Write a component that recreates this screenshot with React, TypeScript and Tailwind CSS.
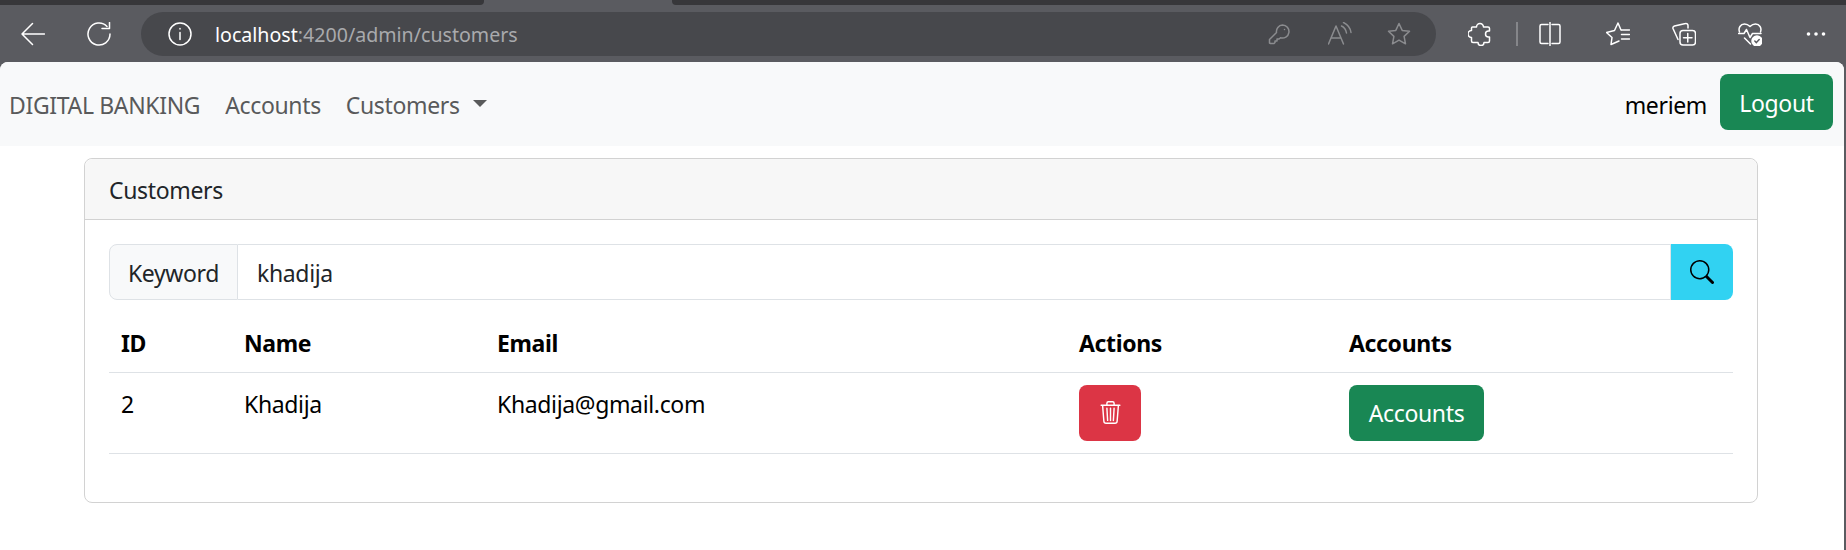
import { BsSearch, BsTrash3 } from "react-icons/bs";

const ToolIcon = ({ className, children }: { className: string; children: React.ReactNode }) => (
    <svg viewBox="0 0 24 24" fill="none" stroke="currentColor" strokeWidth="1.5" strokeLinecap="round" strokeLinejoin="round" className={`size-6 shrink-0 ${className}`}>
        {children}
    </svg>
);

const STAR = "M12 1.5l3.2 6.9 7.3.9-5.4 5.1 1.4 7.4-6.5-3.7-6.5 3.7 1.4-7.4-5.4-5.1 7.3-.9z";

const BrowserBar = () => (
    <div className="flex h-[62px] flex-col">
        <div className="flex h-[5px]">
            <div className="w-[484px] rounded-br bg-[#37373a]" />
            <div className="ml-[188px] flex-1 rounded-bl bg-[#37373a]" />
        </div>
        <div className="flex flex-1 items-center pr-[18px] text-white">
            <ToolIcon className="ml-[21px]">
                <path d="M23.5 12H1M11.5 1.5 1 12l10.5 10.5" />
            </ToolIcon>
            <ToolIcon className="ml-[42px]">
                <path d="M23 12A11 11 0 1 1 20 4.5" />
                <path d="M22.5.5V6.5H15" />
            </ToolIcon>
            <div className="ml-[30px] flex h-11 flex-1 items-center rounded-full bg-[#47484c]">
                <ToolIcon className="ml-[27px]">
                    <circle cx="12" cy="12" r="11" />
                    <path d="M12 10.5v7M12 6.5v.6" />
                </ToolIcon>
                <div className="ml-[23px] flex-1 pt-[2px] font-['Noto_Sans',sans-serif] text-[19.6px] tracking-normal text-[#a9aaad]">
                    <span className="text-white">localhost</span>:4200/admin/customers
                </div>
                <ToolIcon className="text-[#8b8c8f]">
                    <path d="M15.500 3a6.500 6.500 0 1 1-2 12.700l-1.500 1.300H10v2H8v1.500l-1 1H3.500L2.500 21v-3.500l7-7A6.500 6.500 0 0 1 15.500 3Z" />
                    <path d="M17.500 7.500v.1" />
                </ToolIcon>
                <ToolIcon className="ml-[37px] text-[#8b8c8f]">
                    <path d="M.5 22 8 4l7.5 18M3 16h10" />
                    <path d="M13.5 4c3 1.5 4.5 4 5 7M15.5.5c4 2 7 5.5 7.5 10" />
                </ToolIcon>
                <ToolIcon className="ml-[35px] text-[#8b8c8f]">
                    <path d={STAR} />
                </ToolIcon>
                <div className="w-[25px]" />
            </div>
            <ToolIcon className="ml-8">
                <path d="M4.500 5H8.500a3.500 3.500 0 0 1 7 0H20a1.500 1.500 0 0 1 1.500 1.500V9h-1a3 3 0 0 0 0 6h1v4a1.500 1.500 0 0 1-1.500 1.500h-4a3 3 0 0 1-6 0H5a1.500 1.500 0 0 1-1.500-1.500v-3.500a3.500 3.500 0 0 1 0-7V6a1 1 0 0 1 1-1Z" />
            </ToolIcon>
            <div className="ml-[24px] h-6 w-[2px] bg-[#85868a]" />
            <ToolIcon className="ml-[20px]">
                <path d="M10 2.500H3.500A1.500 1.500 0 0 0 2 4v16a1.500 1.500 0 0 0 1.500 1.500H10M14 2.500h6.500A1.500 1.500 0 0 1 22 4v16a1.500 1.500 0 0 1-1.500 1.500H14M12 .5v23" />
            </ToolIcon>
            <ToolIcon className="ml-[44px]">
                <path d="M15 8 12 1 8.500 8.500 .5 10.500 6 15.500 5 22.500 13 19" />
                <path d="M15.500 8H23.500M15.500 12.500H23.500M15.500 17H23.500" />
            </ToolIcon>
            <ToolIcon className="ml-[42px]">
                <path d="M6 17.500 1 6.500A2 2 0 0 1 2.500 4l11-2.500a2 2 0 0 1 2.500 2V6" />
                <rect x="8" y="8.500" width="15.500" height="14.500" rx="3" />
                <path d="M15.750 11.500v8.500M11.500 15.750h8.500" />
            </ToolIcon>
            <ToolIcon className="ml-[42px]">
                <path d="M1.500 10c-1.500-4 1-8 5-8 3 0 4.500 1.500 5.500 2.500C13 3.500 14.500 2 17.500 2c4 0 6.500 4 5 8" />
                <path d="M.5 11.500H6l2.500-4 3.500 8 2.500-4H23M6.500 16l6 6" />
                <circle cx="19" cy="19" r="5" fill="currentColor" />
                <path d="m16.800 19 1.600 1.600 2.800-3" stroke="#5a5b60" />
            </ToolIcon>
            <svg viewBox="0 0 24 24" fill="currentColor" className="ml-[42px] size-6 shrink-0">
                <circle cx="4.500" cy="12" r="1.800" />
                <circle cx="12" cy="12" r="1.800" />
                <circle cx="19.500" cy="12" r="1.800" />
            </svg>
        </div>
    </div>
);

const Navbar = () => (
    <nav className="flex h-[84px] items-center rounded-t-lg bg-[#f8f9fa] pt-[2px] pr-[11px] pl-[9px] text-[#595a5b]">
        <span>DIGITAL BANKING</span>
        <span className="ml-[25px]">Accounts</span>
        <span className="ml-[25px]">Customers</span>
        <span className="mb-[3px] ml-[13px] h-0 w-0 border-x-[7px] border-t-[7px] border-x-transparent border-t-[#595a5b]" />
        <span className="ml-auto text-black">meriem</span>
        <button type="button" className="mb-[6px] ml-[13px] h-14 w-[113px] rounded-lg bg-[#198754] pt-[2px] text-white">Logout</button>
    </nav>
);

const SearchRow = () => (
    <div className="flex h-14">
        <div className="flex w-[129px] items-center justify-center rounded-l-lg border border-[#dee2e6] bg-[#f8f9fa] pt-[2px] text-[#212529]">Keyword</div>
        <div className="flex flex-1 items-center border-y border-r border-[#dee2e6] pt-[2px] pl-[19px] text-[#212529]">khadija</div>
        <button type="button" className="flex w-[62px] items-center justify-center rounded-r-lg bg-[#31d2f2] text-black">
            <BsSearch className="size-6" />
        </button>
    </div>
);

const CustomersTable = () => (
    <table className="mt-[13px] w-full table-fixed text-left text-black">
        <thead>
            <tr className="border-b border-[#dee2e6]">
                <th className="w-[123px] px-3 pt-[13px] pb-[11px] font-bold">ID</th>
                <th className="w-[253px] px-3 pt-[13px] pb-[11px] font-bold">Name</th>
                <th className="w-[582px] px-3 pt-[13px] pb-[11px] font-bold">Email</th>
                <th className="w-[270px] px-3 pt-[13px] pb-[11px] font-bold">Actions</th>
                <th className="px-3 pt-[13px] pb-[11px] font-bold">Accounts</th>
            </tr>
        </thead>
        <tbody>
            <tr className="border-b border-[#dee2e6] align-top">
                <td className="px-3 pt-[14px]">2</td>
                <td className="px-3 pt-[14px]">Khadija</td>
                <td className="px-3 pt-[14px]">Khadija@gmail.com</td>
                <td className="p-3">
                    <button type="button" className="flex h-14 w-[62px] items-center justify-center rounded-lg bg-[#dc3545] text-white">
                        <BsTrash3 className="size-[23px]" />
                    </button>
                </td>
                <td className="p-3">
                    <button type="button" className="h-14 w-[135px] rounded-lg bg-[#198754] pt-[2px] text-white">Accounts</button>
                </td>
            </tr>
        </tbody>
    </table>
);

const App = () => {
    return (
        <div className="h-[550px] overflow-hidden bg-[#5a5b60] font-['Noto_Sans',sans-serif] text-[23px] tracking-[-0.35px]">
            <BrowserBar />
            <div className="mr-[2px] h-[488px] rounded-t-lg bg-white">
                <Navbar />
                <div className="mt-3 ml-[84px] h-[345px] w-[1674px] rounded-lg border border-[#d2d2d2]">
                    <div className="flex h-[61px] items-center rounded-t-lg border-b border-[#d2d2d2] bg-[#f7f7f7] pt-[2px] pl-6 text-[#212529]">Customers</div>
                    <div className="p-6">
                        <SearchRow />
                        <CustomersTable />
                    </div>
                </div>
            </div>
        </div>
    );
};

export default App;
